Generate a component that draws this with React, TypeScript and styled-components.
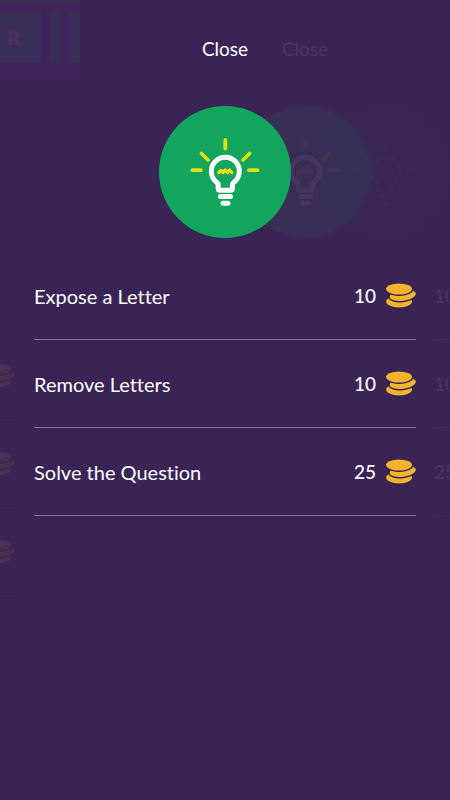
import React from "react";
import styled, { createGlobalStyle } from "styled-components";

const GlobalStyle = createGlobalStyle`
  *, *::before, *::after { box-sizing: border-box; }
  body {
    margin: 0;
    background: #3a2455;
    color: #fff;
    font-family: Lato, "Gill Sans", sans-serif;
    font-size: 19px;
    font-variant-ligatures: none;
    line-height: 24px;
  }
`;

const Page = styled.div`
  position: relative;
  min-height: 100vh;
  overflow: hidden;
  background: #3a2455;
`;

const Screen = styled.main`
  position: relative;
  display: flex;
  flex-direction: column;
  padding-top: 37px;
`;

const Echo = styled.div<{ $x: number; $y?: number; $opacity: number }>`
  position: absolute;
  top: ${(p) => p.$y ?? 0}px;
  left: ${(p) => p.$x}px;
  width: 100%;
  opacity: ${(p) => p.$opacity};
  pointer-events: none;
`;

const CloseButton = styled.button`
  align-self: center;
  padding: 0;
  border: 0;
  background: none;
  color: inherit;
  font: inherit;
  cursor: pointer;
`;

const CloseEcho = styled.div`
  align-self: center;
  height: 24px;
`;

const Badge = styled.div`
  align-self: center;
  width: 132px;
  height: 132px;
  margin-top: 45px;
  border-radius: 50%;
  background: #12a55e;

  svg { display: block; }
`;

const List = styled.ul<{ $start?: number }>`
  margin: 14px 34px 0 ${(p) => p.$start ?? 34}px;
  padding: 0;
  list-style: none;
`;

const Item = styled.li`
  border-bottom: 1px solid #84769a;
`;

const rowLayout = `
  display: flex;
  align-items: center;
  width: 100%;
  height: 87px;
`;

const HintButton = styled.button`
  ${rowLayout}
  padding: 0;
  border: 0;
  background: none;
  color: inherit;
  font: inherit;
  text-align: left;
  cursor: pointer;
`;

const HintEcho = styled.div`
  ${rowLayout}
`;

const Label = styled.span`
  flex: 1;
  font-size: 20px;
`;

const Price = styled.span`
  display: flex;
  align-items: center;
  gap: 10px;
  font-weight: 500;
`;

const BoardEcho = styled.div`
  position: absolute;
  top: 0;
  left: 0;
  display: flex;
  gap: 9px;
  width: 80px;
  height: 80px;
  padding-top: 10px;
  overflow: hidden;
  background: #3f245a;
  border-top: 2px solid #3b2b57;
`;

const Tile = styled.div<{ $width: number }>`
  display: flex;
  flex: none;
  align-items: center;
  width: ${(p) => p.$width}px;
  height: 51px;
  padding-left: ${(p) => (p.$width > 20 ? 7 : 0)}px;
  background: #392d57;
  color: #492f63;
  font-family: "Open Sans", sans-serif;
  font-size: 20px;
  font-weight: 800;
`;

function Bulb() {
  return (
    <svg width="132" height="132" viewBox="0 0 132 132" fill="none" aria-hidden="true">
      <path
        d="M66.3 34v8.5M42.5 47.5l6.5 6.5M90.5 47.5L84 54M33.5 64.2H42M90 64.2h8.5"
        stroke="#dfe013"
        strokeWidth="3.8"
        strokeLinecap="round"
      />
      <path
        d="M61.2 84.2q-2 0-2-2v-2.7q0-2-1.5-3.2a14 14 0 1 1 17.2 0q-1.5 1.2-1.5 3.2v2.7q0 2-2 2z"
        stroke="#fff"
        strokeWidth="5"
        strokeLinejoin="round"
      />
      <path
        d="M59.8 66.5l2.2-2 2.1 2 2.2-2.5 2.2 2.5 2.1-2.5 2.2 2.5"
        stroke="#f5df0b"
        strokeWidth="3.4"
        strokeLinecap="round"
        strokeLinejoin="round"
      />
      <path d="M61.5 90.6h10M64 97.2h5" stroke="#fff" strokeWidth="5" strokeLinecap="round" />
    </svg>
  );
}

function Coins() {
  return (
    <svg width="30" height="25" viewBox="0 0 31 25" fill="#f8b42b" aria-hidden="true">
      <ellipse cx="13.5" cy="19" rx="13.3" ry="5.8" />
      <g stroke="#3a2455" strokeWidth="3" paintOrder="stroke">
        <ellipse cx="17.3" cy="12.3" rx="13.6" ry="5.6" transform="rotate(-7 17.3 12.3)" />
        <ellipse cx="13.5" cy="5.8" rx="13.4" ry="5.7" />
      </g>
    </svg>
  );
}

const hints = [
  { label: "Expose a Letter", price: 10 },
  { label: "Remove Letters", price: 10 },
  { label: "Solve the Question", price: 25 },
];

function HintPanel() {
  return (
    <Screen>
      <CloseButton type="button">Close</CloseButton>
      <Badge>
        <Bulb />
      </Badge>
      <List>
        {hints.map((hint) => (
          <Item key={hint.label}>
            <HintButton type="button">
              <Label>{hint.label}</Label>
              <Price>
                {hint.price}
                <Coins />
              </Price>
            </HintButton>
          </Item>
        ))}
      </List>
    </Screen>
  );
}

function PanelEcho({ close, prices, start }: { close?: boolean; prices?: boolean; start?: number }) {
  return (
    <Screen as="div">
      <CloseEcho>{close ? "Close" : null}</CloseEcho>
      <Badge>
        <Bulb />
      </Badge>
      <List $start={start}>
        {hints.map((hint) => (
          <Item key={hint.label}>
            <HintEcho>
              <Label />
              <Price>
                {prices ? hint.price : null}
                <Coins />
              </Price>
            </HintEcho>
          </Item>
        ))}
      </List>
    </Screen>
  );
}

export default function App() {
  return (
    <>
      <GlobalStyle />
      <Page>
        <BoardEcho aria-hidden="true">
          <Tile $width={41}>R</Tile>
          <Tile $width={10} />
          <Tile $width={30} />
        </BoardEcho>
        <Echo aria-hidden="true" $x={160} $opacity={0.01}>
          <PanelEcho />
        </Echo>
        <Echo aria-hidden="true" $x={80} $opacity={0.07}>
          <PanelEcho close prices start={354} />
        </Echo>
        <Echo aria-hidden="true" $x={-401} $y={80} $opacity={0.07}>
          <PanelEcho />
        </Echo>
        <HintPanel />
      </Page>
    </>
  );
}
